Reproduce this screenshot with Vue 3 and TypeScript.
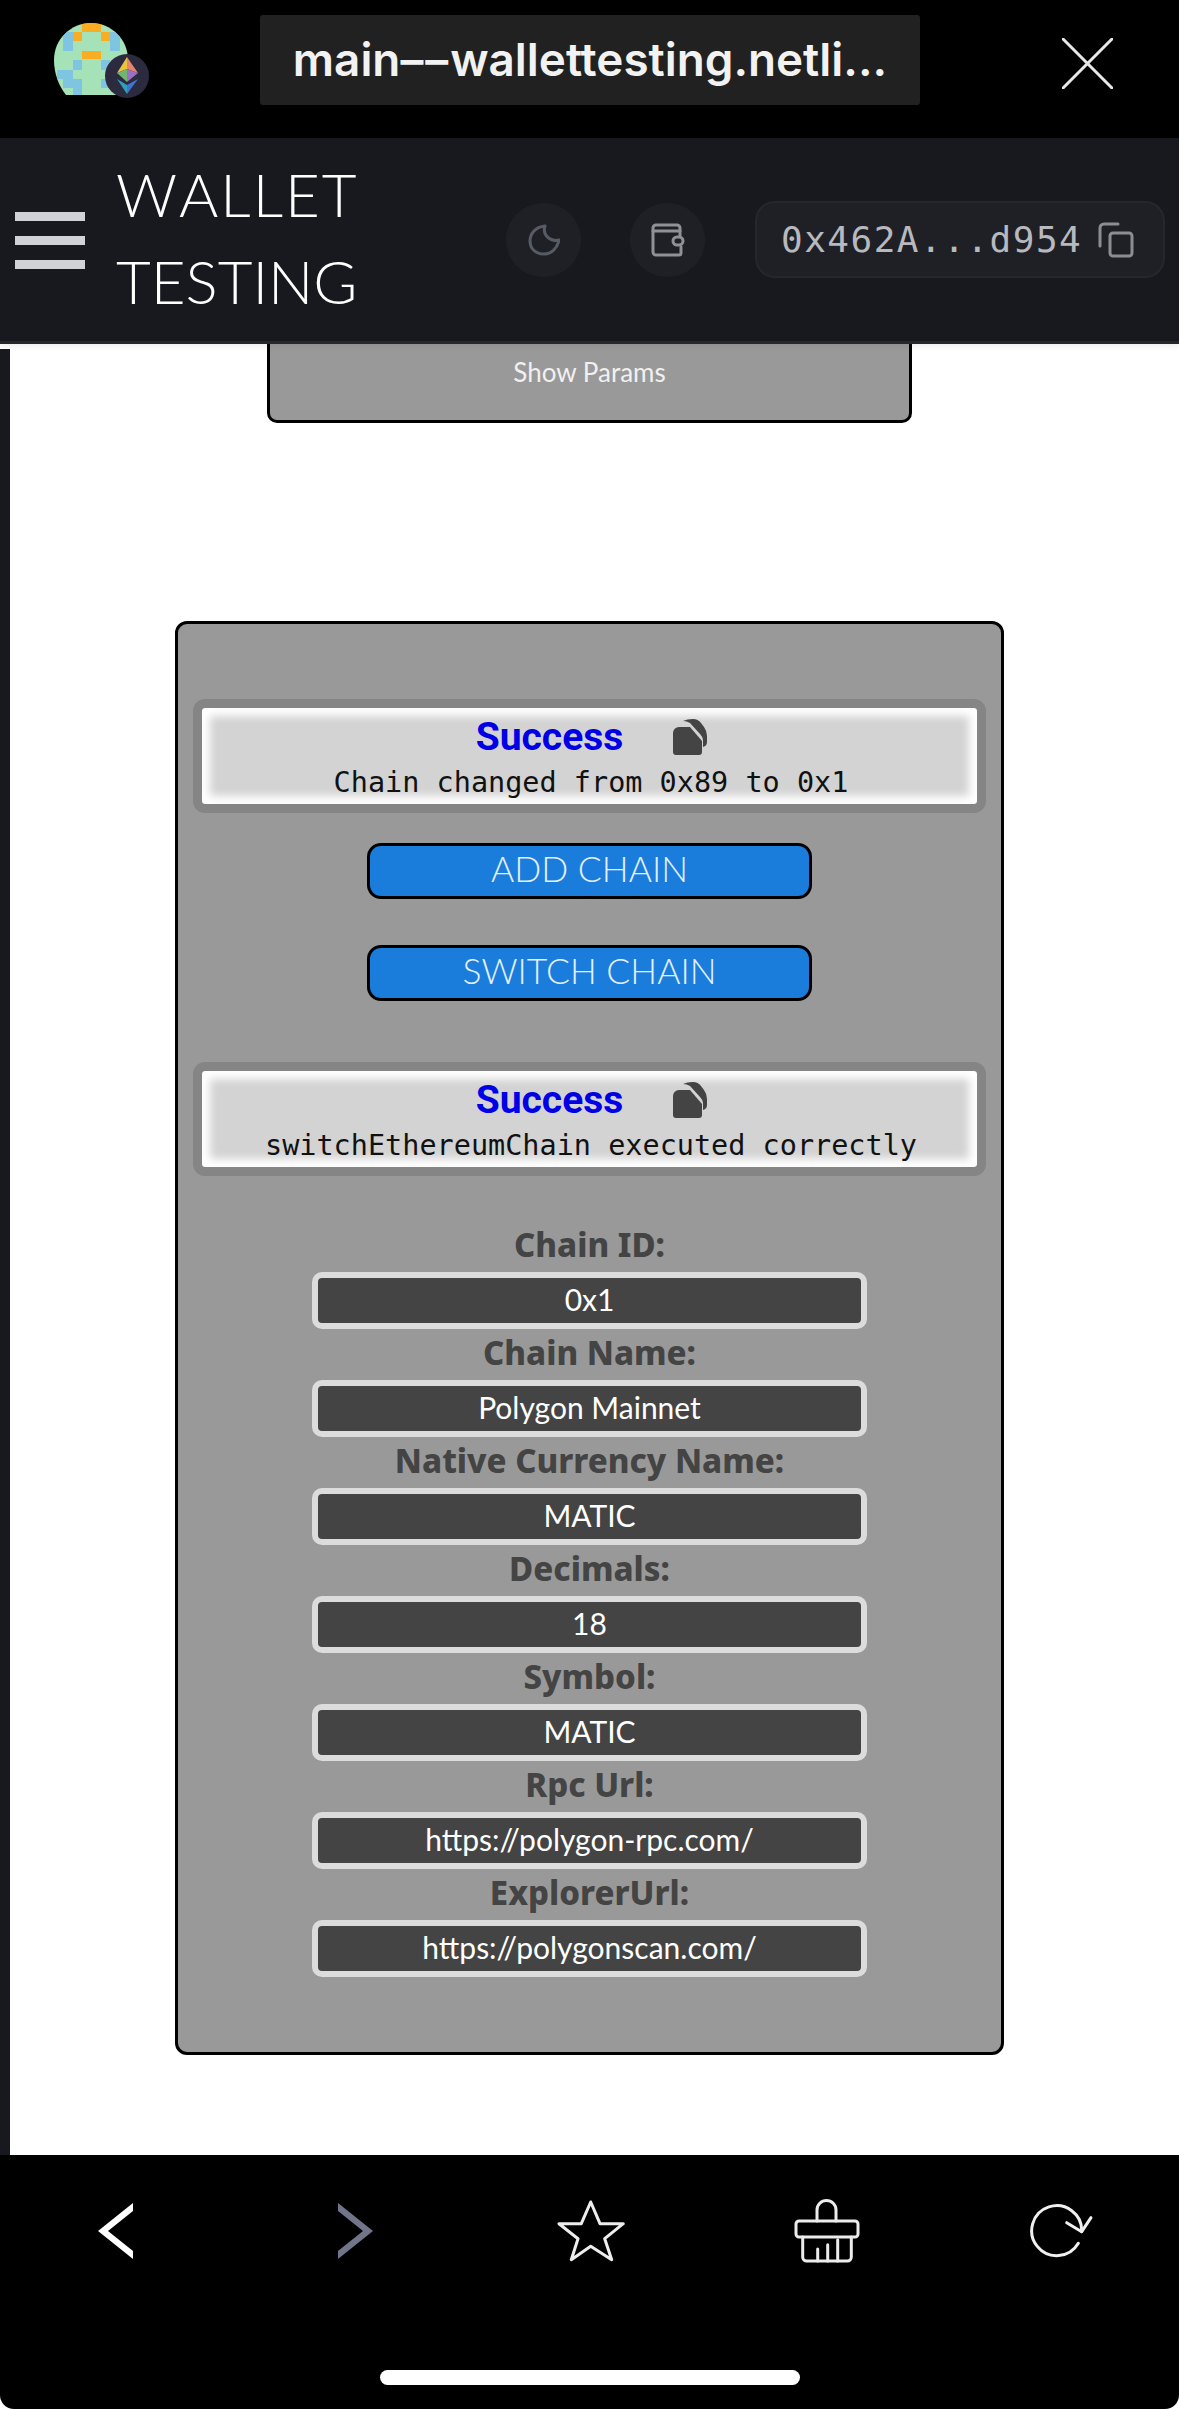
<script setup lang="ts">
interface ChainField {
  label: string
  value: string
}

const chainFields: ChainField[] = [
  { label: 'Chain ID:', value: '0x1' },
  { label: 'Chain Name:', value: 'Polygon Mainnet' },
  { label: 'Native Currency Name:', value: 'MATIC' },
  { label: 'Decimals:', value: '18' },
  { label: 'Symbol:', value: 'MATIC' },
  { label: 'Rpc Url:', value: 'https://polygon-rpc.com/' },
  { label: 'ExplorerUrl:', value: 'https://polygonscan.com/' }
]

const alerts = {
  changed: 'Chain changed from 0x89 to 0x1',
  executed: 'switchEthereumChain executed correctly'
}

// avatar pixels: x, y, w, h in a 74x72 box
const bluePixels = [
  [9, 9, 10, 19],
  [56, 9, 10, 19],
  [19, 37, 9, 10],
  [47, 37, 9, 10],
  [3, 47, 16, 9],
  [9, 56, 19, 9],
  [19, 65, 9, 7],
  [47, 56, 9, 9]
]
const orangePixels = [
  [28, 0, 19, 9],
  [19, 9, 9, 9],
  [47, 9, 9, 9],
  [28, 28, 19, 8]
]
</script>

<template>
  <div class="screen">
    <div class="top-bar">
      <svg class="avatar" viewBox="0 0 100 88" width="100" height="88">
        <defs>
          <clipPath id="avatarClip">
            <path d="M0 37C0 16 17 0 37 0s37 16 37 37c0 14-5 26-12 35H12C5 63 0 51 0 37z" />
          </clipPath>
        </defs>
        <g clip-path="url(#avatarClip)">
          <rect width="74" height="72" fill="#a5e2b8" />
          <rect v-for="(p, i) in bluePixels" :key="'b' + i" :x="p[0]" :y="p[1]" :width="p[2]" :height="p[3]" fill="#7fc4e0" />
          <rect v-for="(p, i) in orangePixels" :key="'o' + i" :x="p[0]" :y="p[1]" :width="p[2]" :height="p[3]" fill="#f9ad22" />
        </g>
        <circle cx="73" cy="53" r="22" fill="#2b2a3f" />
        <polygon points="73,34 73,46 63,50" fill="#e8c33f" />
        <polygon points="73,34 84,50 73,46" fill="#e5866c" />
        <polygon points="63,50 73,46 73,59" fill="#72b56c" />
        <polygon points="84,50 73,46 73,59" fill="#9b6fc4" />
        <polygon points="63,56 73,62 73,71" fill="#2f9fbd" />
        <polygon points="84,56 73,62 73,71" fill="#3d76cc" />
      </svg>
      <div class="url-box">main<span class="url-dashes">––</span>wallettesting.netli...</div>
      <svg class="close-icon" viewBox="0 0 51 51" width="51" height="51" fill="none" stroke="#e8e8e8" stroke-width="3" stroke-linecap="round">
        <path d="M1 1l49 49M50 1L1 50" />
      </svg>
    </div>

    <header class="app-header">
      <div class="burger"><span></span><span></span><span></span></div>
      <div class="app-title"><span class="title-first">WALLET</span><br />TESTING</div>
      <div class="round-btn moon-btn">
        <svg viewBox="0 0 32 32" width="32" height="32" fill="none" stroke="#565b66" stroke-width="3" stroke-linejoin="round">
          <path d="M17 2C7 3 2 10 2 17c0 8 6 13 14 13 7 0 13-5 15-14-9 2-17-5-14-14z" />
        </svg>
      </div>
      <div class="round-btn wallet-btn">
        <svg viewBox="0 0 34 34" width="34" height="34" fill="none" stroke="#8f9199" stroke-width="3" stroke-linecap="round" stroke-linejoin="round">
          <path d="M29 13V5a3 3 0 0 0-3-3H5a3 3 0 0 0-3 3v24a3 3 0 0 0 3 3h23a2 2 0 0 0 2-2v-6" />
          <path d="M2 8h27" />
          <rect x="22" y="14" width="10" height="8" rx="4" />
        </svg>
      </div>
      <div class="address-box">
        <span class="address-text">0x462A...d954</span>
        <svg class="address-copy" viewBox="0 0 36 36" width="36" height="36" fill="none" stroke="#8b8d94" stroke-width="3" stroke-linejoin="round" stroke-linecap="round">
          <path d="M2 24V6a4 4 0 0 1 4-4h14" />
          <rect x="12" y="11" width="22" height="23" rx="3" />
        </svg>
      </div>
    </header>

    <main class="content">
      <div class="side-strip"></div>
      <div class="content-inner">
        <div class="params-card">Show Params</div>

        <section class="chain-card">
          <div class="alert">
            <div class="alert-head">
              <span class="alert-title">Success</span>
              <svg class="alert-copy" viewBox="0 0 34 36" width="34" height="36">
                <path d="M6 8h11l12 14v11a3 3 0 0 1-3 3H3a3 3 0 0 1-3-3V14a6 6 0 0 1 6-6z" fill="#444" />
                <path d="M10 2Q14 0 20 0q5 0 8 4l3 4q3 4 3 9v6q0 4-4 5v-7q0-3-3-6L17 4q-3-2-7-2z" fill="#444" />
              </svg>
            </div>
            <div class="alert-msg">{{ alerts.changed }}</div>
          </div>

          <button class="action-btn first-btn">ADD CHAIN</button>
          <button class="action-btn second-btn">SWITCH CHAIN</button>

          <div class="alert second-alert">
            <div class="alert-head">
              <span class="alert-title">Success</span>
              <svg class="alert-copy" viewBox="0 0 34 36" width="34" height="36">
                <path d="M6 8h11l12 14v11a3 3 0 0 1-3 3H3a3 3 0 0 1-3-3V14a6 6 0 0 1 6-6z" fill="#444" />
                <path d="M10 2Q14 0 20 0q5 0 8 4l3 4q3 4 3 9v6q0 4-4 5v-7q0-3-3-6L17 4q-3-2-7-2z" fill="#444" />
              </svg>
            </div>
            <div class="alert-msg">{{ alerts.executed }}</div>
          </div>

          <div class="fields">
            <template v-for="field in chainFields" :key="field.label">
              <div class="field-label">{{ field.label }}</div>
              <div class="field-value">{{ field.value }}</div>
            </template>
          </div>
        </section>
      </div>
    </main>

    <footer class="bottom-bar">
      <div class="nav-row">
        <svg class="nav-back" viewBox="0 0 36 56" width="36" height="56" fill="#fff">
          <path d="M35 0v8L10 28l25 20v8L0 28z" />
        </svg>
        <svg class="nav-forward" viewBox="0 0 36 56" width="36" height="56" fill="#72748a">
          <path d="M0 0v8l25 20L0 48v8l35-28z" />
        </svg>
        <svg class="nav-star" viewBox="0 0 68 62" width="68" height="62" fill="none" stroke="#eee" stroke-width="3" stroke-linejoin="round">
          <path d="M33.700 2L43 23.700h23.300L47.700 38.700l7 21-21-13.400-19.400 13.400 6.700-21L2 23.700h22.300z" />
        </svg>
        <svg class="nav-brush" viewBox="0 0 66 64" width="66" height="64" fill="none" stroke="#ececec" stroke-width="3" stroke-linejoin="round" stroke-linecap="round">
          <path d="M23 22V11a9.500 9.500 0 0 1 19 0v11" />
          <rect x="2" y="22" width="62" height="16" rx="3" />
          <path d="M8.700 38v20a4 4 0 0 0 4 4h40.600a4 4 0 0 0 4-4V38" />
          <path d="M23.700 62V50M33.700 62V45.700M43.700 62V40.700" />
        </svg>
        <svg class="nav-refresh" viewBox="0 0 66 58" width="66" height="58" fill="none" stroke="#f0f0f0" stroke-width="3" stroke-linecap="round" stroke-linejoin="round">
          <path d="M50.300 41.300A25 25 0 1 1 53.700 29.700" />
          <path d="M38.700 20.700L53.700 29.700 63 15.700" />
        </svg>
      </div>
      <div class="home-indicator"></div>
    </footer>
  </div>
</template>

<style>
html,
body {
  margin: 0;
  background: #fff;
}
</style>

<style scoped>
.screen {
  width: 1179px;
  height: 2409px;
  display: flex;
  flex-direction: column;
  overflow: hidden;
  font-family: Lato, "Noto Sans", sans-serif;
}

.top-bar {
  height: 138px;
  background: #000;
  display: flex;
  align-items: flex-start;
  flex-shrink: 0;
}

.avatar {
  margin: 23px 0 0 54px;
}

.url-box {
  width: 660px;
  height: 90px;
  margin: 15px 0 0 106px;
  background: #212121;
  border-radius: 3px;
  color: #f2f2f2;
  font-family: Inter, sans-serif;
  font-size: 45.800px;
  font-weight: 600;
  line-height: 90px;
  text-align: center;
  white-space: nowrap;
}

.url-dashes {
  letter-spacing: 2px;
}

.close-icon {
  margin: 38px 0 0 142px;
}

.app-header {
  height: 206px;
  flex-shrink: 0;
  background: #18191e;
  border-bottom: 3px solid #26272b;
  box-sizing: border-box;
  display: flex;
  align-items: center;
  position: relative;
  z-index: 2;
  box-shadow: 0 2px 6px rgba(0, 0, 0, 0.08);
}

.burger {
  width: 70px;
  margin: 2px 0 0 15px;
  display: flex;
  flex-direction: column;
  gap: 15px;
}

.burger span {
  height: 9px;
  background: #d1d2d8;
}

.app-title {
  width: 288px;
  margin: 0 0 4px 31px;
  color: #fff;
  font-size: 60px;
  font-weight: 300;
  font-kerning: none;
  line-height: 87px;
}

.title-first {
  letter-spacing: 2px;
}

.round-btn {
  width: 75px;
  height: 74px;
  border-radius: 50%;
  background: #1e2025;
  display: flex;
  align-items: center;
  justify-content: center;
  flex-shrink: 0;
}

.moon-btn {
  margin-left: 102px;
}

.wallet-btn {
  margin-left: 49px;
}

.address-box {
  width: 410px;
  height: 77px;
  margin-left: 50px;
  box-sizing: border-box;
  border: 2px solid #25272c;
  border-radius: 20px;
  background: #1f2026;
  display: flex;
  align-items: center;
  padding-left: 24px;
  flex-shrink: 0;
}

.address-text {
  color: #b8b9be;
  font-family: "DejaVu Sans Mono", monospace;
  font-size: 36px;
  letter-spacing: 1.500px;
  white-space: nowrap;
}

.address-copy {
  margin-left: 16px;
}

.content {
  flex: 1;
  background: #fff;
  display: flex;
  overflow: hidden;
  min-height: 0;
}

.side-strip {
  width: 10px;
  margin-top: 5px;
  background: #18191e;
  flex-shrink: 0;
}

.content-inner {
  flex: 1;
  display: flex;
  flex-direction: column;
  align-items: center;
  padding-right: 10px;
}

.params-card {
  width: 645px;
  height: 79px;
  box-sizing: border-box;
  background: #999;
  border: 3px solid #000;
  border-top: none;
  border-radius: 0 0 10px 10px;
  color: #f0f0f0;
  font-size: 26px;
  line-height: 56px;
  text-align: center;
}

.chain-card {
  width: 829px;
  margin-top: 198px;
  box-sizing: border-box;
  height: 1434px;
  background: #999;
  border: 3px solid #000;
  border-radius: 12px;
  padding-top: 75px;
  display: flex;
  flex-direction: column;
  align-items: center;
}

.alert {
  width: 793px;
  height: 114px;
  box-sizing: border-box;
  border: 9px solid #858585;
  border-radius: 12px;
  background: #d3d3d3;
  box-shadow: inset 0 0 8px 8px #fff;
  text-align: center;
  flex-shrink: 0;
}

.second-alert {
  margin-top: 61px;
}

.alert-head {
  height: 57px;
  display: flex;
  align-items: center;
  justify-content: center;
  gap: 50px;
  padding-left: 4px;
}

.alert-title {
  color: #0000e6;
  font-family: Roboto, sans-serif;
  font-size: 39px;
  font-weight: 700;
}

.alert-msg {
  color: #111;
  font-family: "DejaVu Sans Mono", monospace;
  font-size: 28.500px;
  line-height: 36px;
  padding-left: 3px;
  white-space: nowrap;
}

.action-btn {
  width: 445px;
  height: 56px;
  box-sizing: border-box;
  background: #1a7ddb;
  border: 3px solid #000;
  border-radius: 14px;
  color: #e4effb;
  font-family: Lato, sans-serif;
  font-size: 35.500px;
  font-weight: 300;
  padding: 0 0 5px;
  flex-shrink: 0;
}

.first-btn {
  margin-top: 30px;
}

.second-btn {
  margin-top: 46px;
}

.fields {
  width: 555px;
  margin-top: 45px;
  display: flex;
  flex-direction: column;
  align-items: stretch;
}

.field-label {
  height: 51px;
  color: #444;
  font-family: "Noto Sans", sans-serif;
  font-size: 33px;
  font-weight: 800;
  line-height: 48px;
  text-align: center;
  white-space: nowrap;
}

.field-value {
  height: 57px;
  box-sizing: border-box;
  background: #444;
  border: 6px solid #dcdcdc;
  border-radius: 10px;
  color: #fff;
  font-size: 30px;
  line-height: 43px;
  text-align: center;
}

.bottom-bar {
  height: 254px;
  flex-shrink: 0;
  background: #000;
  border-radius: 0 0 14px 14px;
  position: relative;
}

.nav-row {
  height: 72px;
  padding-top: 40px;
  display: flex;
  align-items: center;
}

.nav-back {
  margin-left: 98px;
}

.nav-forward {
  margin-left: 204px;
}

.nav-star {
  margin-left: 183px;
}

.nav-brush {
  margin-left: 169px;
}

.nav-refresh {
  margin-left: 168px;
}

.home-indicator {
  width: 420px;
  height: 15px;
  margin: 103px auto 0;
  border-radius: 8px;
  background: #fff;
}
</style>
